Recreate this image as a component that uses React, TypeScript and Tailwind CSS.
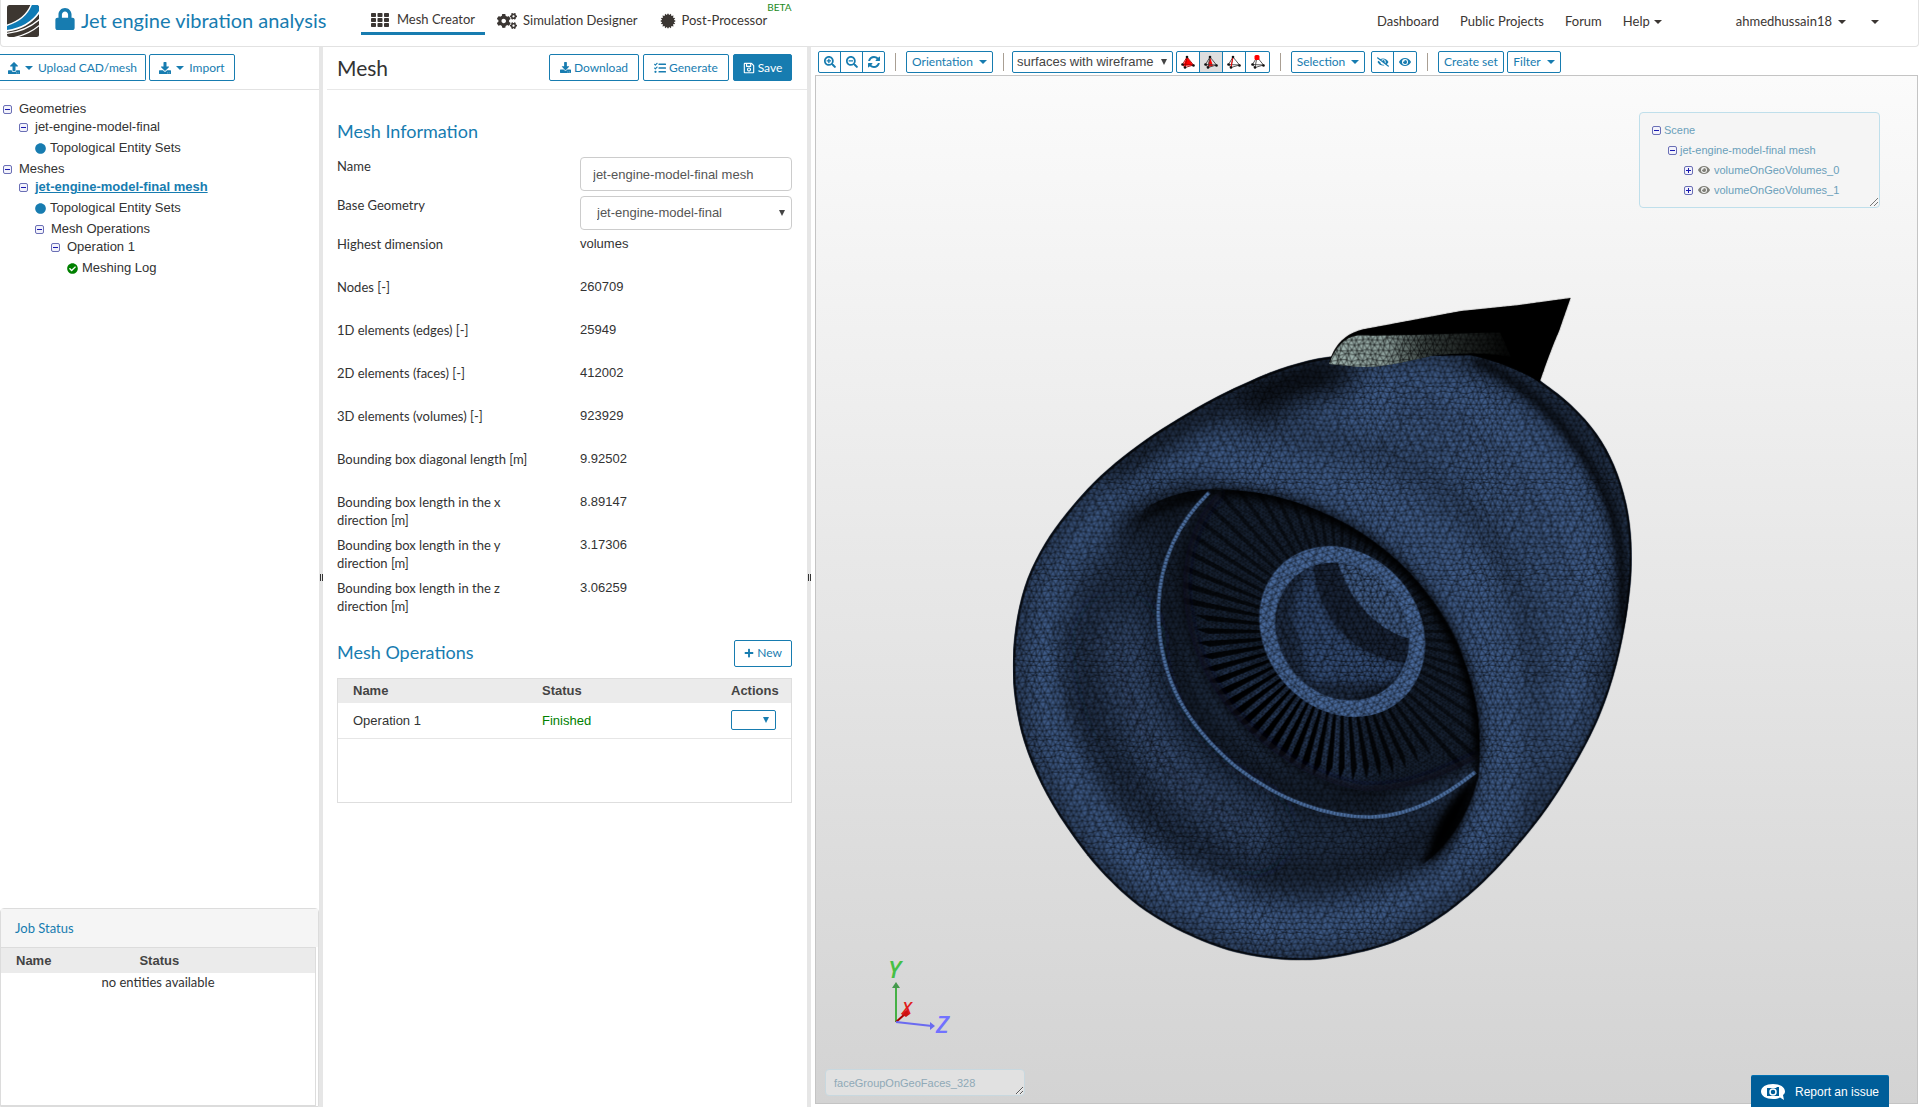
import React from 'react';
import clsx from 'clsx';
import {
  FaCheckCircle,
  FaCircle,
  FaCogs,
  FaDownload,
  FaEye,
  FaEyeSlash,
  FaLock,
  FaPlus,
  FaRegSave,
  FaSearchMinus,
  FaSearchPlus,
  FaTasks,
  FaUpload,
} from 'react-icons/fa';

const lato = "font-['Lato','Open_Sans',sans-serif]";
const arial = "font-['Liberation_Sans',Arial,sans-serif]";

type TreeNode = {
  label: string;
  level: number;
  kind: 'branch' | 'set' | 'done';
  active?: boolean;
};

const tree: TreeNode[] = [
  { label: 'Geometries', level: 0, kind: 'branch' },
  { label: 'jet-engine-model-final', level: 1, kind: 'branch' },
  { label: 'Topological Entity Sets', level: 2, kind: 'set' },
  { label: 'Meshes', level: 0, kind: 'branch' },
  { label: 'jet-engine-model-final mesh', level: 1, kind: 'branch', active: true },
  { label: 'Topological Entity Sets', level: 2, kind: 'set' },
  { label: 'Mesh Operations', level: 2, kind: 'branch' },
  { label: 'Operation 1', level: 3, kind: 'branch' },
  { label: 'Meshing Log', level: 4, kind: 'done' },
];

const indents = ['pl-[3px]', 'pl-[19px]', 'pl-[35px]', 'pl-[51px]', 'pl-[67px]'];

const meshFacts = [
  ['Highest dimension', 'volumes'],
  ['Nodes [-]', '260709'],
  ['1D elements (edges) [-]', '25949'],
  ['2D elements (faces) [-]', '412002'],
  ['3D elements (volumes) [-]', '923929'],
  ['Bounding box diagonal length [m]', '9.92502'],
  ['Bounding box length in the x direction [m]', '8.89147'],
  ['Bounding box length in the y direction [m]', '3.17306'],
  ['Bounding box length in the z direction [m]', '3.06259'],
];

function Caret({ className }: { className?: string }) {
  return (
    <svg className={clsx('h-1 w-2 shrink-0', className)} viewBox="0 0 8 4" fill="currentColor">
      <path d="M0 0h8L4 4z" />
    </svg>
  );
}

function Toggle({ open = true }: { open?: boolean }) {
  return (
    <svg className="h-[9px] w-[9px] shrink-0" viewBox="0 0 9 9">
      <rect x=".5" y=".5" width="8" height="8" rx="1.5" fill="#f2f2fb" stroke="#6a6fb5" />
      <path d="M2 4.5h5" stroke="#1a1ab0" />
      {!open && <path d="M4.5 2v5" stroke="#1a1ab0" />}
    </svg>
  );
}

function Logo() {
  return (
    <svg className="h-8 w-8" viewBox="0 0 32 32">
      <defs>
        <clipPath id="logo">
          <rect width="32" height="32" rx="2.5" />
        </clipPath>
      </defs>
      <g clipPath="url(#logo)">
        <rect width="32" height="32" fill="#3d3731" />
        <path d="M0 20C11 17 20 11 24 0h8v9C25 17 15 23 0 26z" fill="#0f7bb5" />
        <path d="M-1 20.5C11 17 20 11 24.500-1" fill="none" stroke="#fff" strokeWidth="1.400" />
        <path d="M-1 26C14 24 26 17 33 6" fill="none" stroke="#fff" strokeWidth="1.600" />
        <path d="M-1 28.500C14 27 25 21 33 14" fill="none" stroke="#fff" strokeWidth="1.200" />
        <path d="M5 33C16 31 26 26 33 20" fill="none" stroke="#fff" strokeWidth="1.200" />
      </g>
    </svg>
  );
}

function GridIcon() {
  return (
    <svg className="h-[14px] w-[18px]" viewBox="0 0 18 14" fill="currentColor">
      {[0, 5, 10].map((y) => [0, 6.5, 13].map((x) => <rect key={`${x}-${y}`} x={x} y={y} width="5" height="4" rx=".8" />))}
    </svg>
  );
}

function BurstIcon() {
  const points = Array.from({ length: 32 }, (_, i) => {
    const r = i % 2 ? 6 : 7.8;
    const a = (i * Math.PI) / 16;
    return `${(8 + r * Math.cos(a)).toFixed(2)},${(8 + r * Math.sin(a)).toFixed(2)}`;
  }).join(' ');
  return (
    <svg className="h-4 w-4" viewBox="0 0 16 16" fill="currentColor">
      <polygon points={points} />
    </svg>
  );
}

function RefreshIcon() {
  return (
    <svg className="h-3 w-3" viewBox="0 0 1536 1536" fill="currentColor">
      <path d="M1511 928q0 5-1 7-64 268-268 434.500t-478 166.500q-146 0-282.500-55t-243.500-157l-129 129q-19 19-45 19t-45-19-19-45v-448q0-26 19-45t45-19h448q26 0 45 19t19 45-19 45l-137 137q71 66 161 102t187 36q134 0 250-65t186-179q11-17 53-117 8-23 30-23h192q13 0 22.500 9.500t9.500 22.500z" />
      <path d="M1536 128v448q0 26-19 45t-45 19h-448q-26 0-45-19t-19-45 19-45l138-138q-148-137-349-137-134 0-250 65t-186 179q-11 17-53 117-8 23-30 23h-199q-13 0-22.500-9.500t-9.500-22.500v-7q65-268 270-434.500t480-166.500q146 0 284 55.500t245 156.500l130-129q19-19 45-19t45 19 19 45z" />
    </svg>
  );
}

type TetraMode = 'solid' | 'edges' | 'wire' | 'points';

function TetraIcon({ mode }: { mode: TetraMode }) {
  return (
    <svg className="h-[14px] w-[14px]" viewBox="0 0 14 14">
      {mode === 'solid' && <path d="M6 2L2 11l10-1z" fill="#f00" />}
      {mode === 'edges' && <path d="M6 2L3.500 12 9 11z" fill="#f00" />}
      <path
        d="M6 2L1.500 9.500 4 12.500l8.500-2.500zM1.500 9.500l11 .5M6 2L4 12.500"
        fill="none"
        stroke={mode === 'solid' ? '#a00' : '#444'}
        strokeWidth=".9"
      />
      {mode === 'wire' && <path d="M6 2L4 12" stroke="#f00" />}
      {[
        [6, 2],
        [1.5, 9.5],
        [4, 12.5],
        [12.5, 10.5],
      ].map(([x, y]) => (
        <circle key={x} cx={x} cy={y} r="1.3" fill="#111" />
      ))}
      {mode === 'points' && <rect x="3.500" y="0" width="5" height="5" rx="1.500" fill="#f00" />}
    </svg>
  );
}

function NavBar() {
  return (
    <header className={clsx('flex h-[47px] shrink-0 items-start rounded-b border border-t-0 border-[#e2e2e2] text-[13px] text-[#3b3633]', lato)}>
      <a href="#home" aria-label="Home" className="ml-[6px] mt-[5px]">
        <Logo />
      </a>
      <FaLock className="ml-4 mt-2 h-[22px] w-5 text-[#177cb0]" />
      <h1 className="ml-[6px] mt-[6px] w-[280px] text-xl leading-7 text-[#177cb0]">Jet engine vibration analysis</h1>
      <nav className="flex">
        <a href="#mesh" className="flex h-[35px] items-center gap-2 border-b-3 border-[#177cb0] px-[10px] pt-2">
          <GridIcon />
          Mesh Creator
        </a>
        <a href="#simulation" className="flex h-[35px] items-center gap-[6px] px-3 pt-[6px]">
          <FaCogs className="h-5 w-5" />
          Simulation Designer
        </a>
        <a href="#post" className="flex h-[35px] items-center gap-[6px] pl-[10px] pt-[6px]">
          <BurstIcon />
          Post-Processor
        </a>
        <span className="text-[10px] leading-[15px] text-[#1b8a1b]">BETA</span>
      </nav>
      <nav className="ml-auto mr-[39px] flex h-[43px] items-center">
        <a href="#dashboard" className="mr-[21px]">Dashboard</a>
        <a href="#projects" className="mr-[21px]">Public Projects</a>
        <a href="#forum" className="mr-[21px]">Forum</a>
        <button className="mr-[74px] flex items-center gap-1">
          Help <Caret />
        </button>
        <button className="mr-[25px] flex items-center gap-[6px]">
          ahmedhussain18 <Caret />
        </button>
        <button aria-label="More">
          <Caret />
        </button>
      </nav>
    </header>
  );
}

function ActionButton({ children, className, primary }: { children: React.ReactNode; className?: string; primary?: boolean }) {
  return (
    <button
      className={clsx(
        'flex h-[27px] items-center justify-center gap-[3px] rounded-xs border border-[#177cb0] text-xs',
        lato,
        primary ? 'bg-[#177cb0] text-white' : 'bg-white text-[#177cb0]',
        className,
      )}
    >
      {children}
    </button>
  );
}

function ProjectTree() {
  return (
    <ul className={clsx('pt-[10px] text-[13px] text-[#333]', arial)}>
      {tree.map((node, i) => (
        <li
          key={i}
          className={clsx('flex items-center', indents[node.level], node.kind === 'branch' ? 'h-[18px] gap-[7px]' : 'h-6 gap-1')}
        >
          {node.kind === 'branch' && <Toggle />}
          {node.kind === 'set' && <FaCircle className="h-[11px] w-[11px] text-[#177cb0]" />}
          {node.kind === 'done' && <FaCheckCircle className="h-[11px] w-[11px] text-[#008000]" />}
          {node.active ? (
            <a href="#mesh" className="font-bold text-[#177cb0] underline">
              {node.label}
            </a>
          ) : (
            <span>{node.label}</span>
          )}
        </li>
      ))}
    </ul>
  );
}

function JobStatus() {
  return (
    <section className="flex h-[199px] flex-col rounded-t border border-[#dcdcdc] text-[#333]">
      <h2 className={clsx('h-[38px] bg-[#f5f5f5] px-[14px] text-[13px] leading-[38px] text-[#177cb0]', lato)}>Job Status</h2>
      <div className="mr-[2px] flex-1 border border-l-0 border-[#dcdcdc]">
        <table className="w-full table-fixed">
          <thead className={clsx('bg-[#ebebeb] text-[13px] text-[#444]', arial)}>
            <tr className="h-[25px]">
              <th className="w-[39%] pl-[15px] text-left">Name</th>
              <th className="pl-4 text-left">Status</th>
            </tr>
          </thead>
          <tbody className={clsx('text-[13px]', lato)}>
            <tr>
              <td colSpan={2} className="text-center leading-[18px]">
                no entities available
              </td>
            </tr>
          </tbody>
        </table>
      </div>
    </section>
  );
}

function Splitter() {
  return (
    <div className="flex w-1 shrink-0 items-center justify-center bg-[#e6e6e6]">
      <div className="h-[7px] w-[3px] border-x border-[#333]" />
    </div>
  );
}

function MeshPanel() {
  return (
    <main className="w-[484px] shrink-0 text-[#333]">
      <div className="ml-1 flex h-[43px] items-center gap-1 border-b border-[#e8e8e8] pb-px pl-[10px] pr-[15px]">
        <h2 className={clsx('mr-auto text-[21px]', lato)}>Mesh</h2>
        <ActionButton className="w-[90px]">
          <FaDownload className="h-[11px] w-[11px]" />
          Download
        </ActionButton>
        <ActionButton className="w-[86px]">
          <FaTasks className="h-3 w-3" />
          Generate
        </ActionButton>
        <ActionButton className="w-[59px]" primary>
          <FaRegSave className="h-3 w-3" />
          Save
        </ActionButton>
      </div>
      <div className="pl-[14px] pr-[15px]">
        <h3 className={clsx('pb-3 pt-[27px] text-lg leading-7 text-[#177cb0]', lato)}>Mesh Information</h3>
        <div className="flex h-[39px] items-start justify-between">
          <label htmlFor="mesh-name" className={clsx('text-[13px] leading-[18px]', lato)}>
            Name
          </label>
          <input
            id="mesh-name"
            defaultValue="jet-engine-model-final mesh"
            className={clsx('h-[34px] w-[212px] rounded border border-[#ccc] px-3 text-[13px] text-[#555]', arial)}
          />
        </div>
        <div className="flex h-[39px] items-start justify-between">
          <label htmlFor="base-geometry" className={clsx('text-[13px] leading-[18px]', lato)}>
            Base Geometry
          </label>
          <div className="relative">
            <select
              id="base-geometry"
              className={clsx('h-[34px] w-[212px] appearance-none rounded border border-[#ccc] bg-white px-4 text-[13px] text-[#555]', arial)}
            >
              <option>jet-engine-model-final</option>
            </select>
            <svg className="pointer-events-none absolute right-[7px] top-[14px] h-[6px] w-[6px]" viewBox="0 0 6 6" fill="#444">
              <path d="M0 0h6L3 6z" />
            </svg>
          </div>
        </div>
        <dl>
          {meshFacts.map(([label, value]) => (
            <div key={label} className="flex h-[43px] items-start justify-between">
              <dt className={clsx('w-[200px] text-[13px] leading-[18px]', lato)}>{label}</dt>
              <dd className={clsx('w-[212px] text-[13px] leading-[18px]', arial)}>{value}</dd>
            </div>
          ))}
        </dl>
        <div className="mt-[17px] flex items-center justify-between">
          <h3 className={clsx('pb-[2px] text-lg leading-[26px] text-[#177cb0]', lato)}>Mesh Operations</h3>
          <ActionButton className="w-[58px]">
            <FaPlus className="h-[10px] w-[10px]" />
            New
          </ActionButton>
        </div>
        <div className="mt-[11px] h-[125px] border border-[#dedede]">
          <table className={clsx('w-full table-fixed text-left text-[13px]', arial)}>
            <thead className="bg-[#ebebeb] text-[#444]">
              <tr className="h-6">
                <th className="w-[188px] pl-[15px]">Name</th>
                <th className="pl-4">Status</th>
                <th className="w-[60px]">Actions</th>
              </tr>
            </thead>
            <tbody>
              <tr className="h-[35px] border-b border-[#e6e6e6]">
                <td className="pl-[15px]">Operation 1</td>
                <td className="pl-4 text-[#008000]">Finished</td>
                <td>
                  <div className="relative w-[45px]">
                    <select aria-label="Actions for Operation 1" className="block h-5 w-[45px] appearance-none rounded-xs border border-[#177cb0] bg-white">
                      <option />
                    </select>
                    <svg className="pointer-events-none absolute right-[7px] top-[7px] h-[6px] w-[6px]" viewBox="0 0 6 6" fill="#177cb0">
                      <path d="M0 0h6L3 6z" />
                    </svg>
                  </div>
                </td>
              </tr>
            </tbody>
          </table>
        </div>
      </div>
    </main>
  );
}

function ToolButton({ children, className, ...rest }: React.ButtonHTMLAttributes<HTMLButtonElement>) {
  return (
    <button
      className={clsx('flex h-[22px] items-center justify-center gap-[6px] rounded-xs border border-[#177cb0] text-xs text-[#177cb0]', className)}
      {...rest}
    >
      {children}
    </button>
  );
}

function ToolGroup({ children }: { children: React.ReactNode }) {
  return <div className="flex h-[22px] divide-x divide-[#177cb0] overflow-hidden rounded-xs border border-[#177cb0] text-[#177cb0]">{children}</div>;
}

function GroupButton({ children, label, pressed }: { children: React.ReactNode; label: string; pressed?: boolean }) {
  return (
    <button aria-label={label} title={label} className={clsx('flex w-[23px] items-center justify-center', pressed && 'bg-[#dedede]')}>
      {children}
    </button>
  );
}

function Divider() {
  return <div className="ml-[10px] mr-[10px] h-[18px] w-px bg-[#a99f93]" />;
}

function ViewToolbar() {
  return (
    <div className={clsx('flex h-7 shrink-0 items-center pl-[3px] pt-px', lato)}>
      <ToolGroup>
        <button aria-label="Zoom in" className="flex w-[22px] items-center justify-center">
          <FaSearchPlus className="h-3 w-3" />
        </button>
        <button aria-label="Zoom out" className="flex w-[22px] items-center justify-center">
          <FaSearchMinus className="h-3 w-3" />
        </button>
        <button aria-label="Reset view" className="flex w-[21px] items-center justify-center">
          <RefreshIcon />
        </button>
      </ToolGroup>
      <Divider />
      <ToolButton className="w-[87px]">
        Orientation <Caret />
      </ToolButton>
      <Divider />
      <div className="relative ml-[-2px] mr-[3px]">
        <select
          aria-label="Render mode"
          className={clsx('block h-[22px] w-[161px] appearance-none rounded-xs border border-[#177cb0] bg-white px-1 text-[13px] leading-5 text-[#444]', arial)}
        >
          <option>surfaces with wireframe</option>
        </select>
        <svg className="pointer-events-none absolute right-[6px] top-2 h-[6px] w-[6px]" viewBox="0 0 6 6" fill="#444">
          <path d="M0 0h6L3 6z" />
        </svg>
      </div>
      <ToolGroup>
        <GroupButton label="Surfaces">
          <TetraIcon mode="solid" />
        </GroupButton>
        <GroupButton label="Surfaces with wireframe" pressed>
          <TetraIcon mode="edges" />
        </GroupButton>
        <GroupButton label="Wireframe">
          <TetraIcon mode="wire" />
        </GroupButton>
        <GroupButton label="Points">
          <TetraIcon mode="points" />
        </GroupButton>
      </ToolGroup>
      <Divider />
      <ToolButton className="mr-[6px] w-[74px]">
        Selection <Caret />
      </ToolButton>
      <ToolGroup>
        <button aria-label="Hide" className="flex w-[22px] items-center justify-center">
          <FaEyeSlash className="h-3 w-3" />
        </button>
        <button aria-label="Show" className="flex w-[22px] items-center justify-center">
          <FaEye className="h-3 w-3" />
        </button>
      </ToolGroup>
      <Divider />
      <ToolButton className="mr-[3px] w-[66px]">Create set</ToolButton>
      <ToolButton className="w-[54px]">
        Filter <Caret />
      </ToolButton>
    </div>
  );
}

// Seamless triangulated tile: grid nodes are jittered, and the jitter wraps at the tile edge.
function meshTile(cells: number, step: number, jitter: number) {
  const offset = (i: number, j: number, k: number) => {
    const s = Math.sin((((i + cells) % cells) + 1) * 127.1 + (((j + cells) % cells) + 1) * 311.7 + k * 74.7) * 43758.5;
    return (s - Math.floor(s) - 0.5) * jitter;
  };
  const node = (i: number, j: number) =>
    `${(i * step + (j % 2 ? step / 2 : 0) + offset(i, j, 1)).toFixed(1)} ${(j * step + offset(i, j, 2)).toFixed(1)}`;
  let d = '';
  for (let j = -1; j <= cells; j++) {
    for (let i = -1; i <= cells; i++) {
      const odd = Math.abs(j % 2);
      d += `M${node(i, j)}L${node(i + 1, j)}M${node(i, j)}L${node(i + odd, j + 1)}M${node(i + 1, j)}L${node(i + odd, j + 1)}`;
    }
  }
  return d;
}

// Smooth closed outline through the given points.
function closedSpline(points: number[][]) {
  const n = points.length;
  const at = (i: number) => points[(i + n) % n];
  let d = `M${points[0].join(' ')}`;
  for (let i = 0; i < n; i++) {
    const [a, b, c, e] = [at(i - 1), at(i), at(i + 1), at(i + 2)];
    d += `C${b[0] + (c[0] - a[0]) / 6} ${b[1] + (c[1] - a[1]) / 6} ${c[0] - (e[0] - b[0]) / 6} ${c[1] - (e[1] - b[1]) / 6} ${c[0]} ${c[1]}`;
  }
  return `${d}z`;
}

const tile = meshTile(12, 12, 7);

const BODY = closedSpline([
  [780, 176], [690, 200], [620, 228], [550, 260], [480, 298], [400, 346], [330, 396], [262, 454], [200, 522], [150, 590], [110, 668],
  [86, 755], [76, 850], [81, 940], [102, 1035], [142, 1130], [200, 1225], [280, 1325], [380, 1412], [500, 1475], [620, 1512],
  [760, 1523], [900, 1500], [1000, 1463], [1100, 1400], [1200, 1310], [1310, 1180], [1400, 1035], [1450, 920], [1482, 800],
  [1500, 680], [1502, 590], [1490, 500], [1462, 415], [1422, 345], [1365, 282], [1295, 228], [1200, 165], [1000, 155], [880, 165],
]);
const OPENING =
  'M318 568C370 500 450 470 540 468C640 468 740 492 850 548C960 610 1050 700 1105 820C1145 920 1158 1020 1150 1110C1130 1190 1090 1260 1020 1310C900 1350 700 1380 520 1330C300 1240 200 1050 210 840C220 700 260 630 318 568z';
const OPENING_EDGE =
  'M380 500C430 478 480 468 540 468C640 468 740 492 850 548C960 610 1050 700 1105 820C1145 920 1158 1020 1150 1110C1130 1190 1090 1260 1020 1310';
const FAN =
  'M555 470C500 520 468 600 468 690C475 820 530 920 600 990C690 1080 790 1130 890 1145C1000 1145 1090 1100 1152 1070C1156 980 1140 900 1100 815C1045 700 960 610 850 550C750 495 650 470 555 470z';
const CASING_RING = 'M528 476C450 550 410 640 411 750C415 900 480 1000 590 1090C690 1165 800 1203 900 1203C1000 1200 1080 1150 1142 1102';
const PYLON =
  'M805 188C815 145 845 118 885 110L1060 78L1110 69L1240 56L1362 40L1335 115C1315 160 1303 195 1291 228C1250 205 1190 180 1130 168L1040 170C990 180 930 198 870 194z';

function EngineModel() {
  const blades = Array.from({ length: 68 }, (_, i) => {
    const a = (i * Math.PI * 2) / 68;
    // blades facing the lower left are wider and end in a pointed tip
    const near = Math.max(0, Math.cos(a - (Math.PI * 127) / 180));
    const w = 0.01 + near * 0.012;
    const p = (r: number, t: number) => `${(835 + r * Math.cos(t)).toFixed(1)},${(787 + r * Math.sin(t)).toFixed(1)}`;
    const tip = a > 0.9 && a < 3.3 ? 352 - near * 22 : 480;
    return (
      <polygon
        key={i}
        points={[p(170, a - 0.02), p(tip - 30, a - w), p(tip, a + w), p(tip - 28, a + w * 1.4), p(170, a + 0.015)].join(' ')}
        fill="#000"
        opacity={0.5 + near * 0.5}
      />
    );
  });

  return (
    <svg className="absolute left-[164px] top-[204px] h-[700px] w-[680px]" viewBox="0 0 1568 1568" preserveAspectRatio="none" role="img" aria-label="Jet engine mesh">
      <defs>
        <pattern id="mesh" width="144" height="144" patternUnits="userSpaceOnUse">
          <path d={tile} fill="none" stroke="#000" strokeWidth="1.400" />
        </pattern>
        <pattern id="mesh-wide" width="144" height="144" patternUnits="userSpaceOnUse" patternTransform="rotate(18) scale(1.6)">
          <path d={tile} fill="none" stroke="#000" strokeWidth="1.100" />
        </pattern>
        <pattern id="mesh-fine" width="144" height="144" patternUnits="userSpaceOnUse" patternTransform="rotate(30) scale(.6)">
          <path d={tile} fill="none" stroke="#000" strokeWidth="1.800" />
        </pattern>
        <clipPath id="body">
          <path d={BODY} />
        </clipPath>
        <clipPath id="opening">
          <path d={OPENING} />
        </clipPath>
        <clipPath id="fan">
          <path d={FAN} />
        </clipPath>
        <clipPath id="bore">
          <ellipse rx="164" ry="144" transform="translate(835 787) rotate(45)" />
        </clipPath>
        <filter id="soft" x="-30%" y="-30%" width="160%" height="160%">
          <feGaussianBlur stdDeviation="30" />
        </filter>
        <filter id="soft-sm" x="-30%" y="-30%" width="160%" height="160%">
          <feGaussianBlur stdDeviation="9" />
        </filter>
        <linearGradient id="pylon" x1="805" x2="1240" y1="0" y2="0" gradientUnits="userSpaceOnUse">
          <stop offset="0" stopColor="#a6bcb7" />
          <stop offset=".3" stopColor="#8fa29e" />
          <stop offset=".5" stopColor="#3a4341" />
          <stop offset="1" stopColor="#000" />
        </linearGradient>
      </defs>

      <g clipPath="url(#body)">
        <rect width="1568" height="1568" fill="#405d8b" />
        {/* shading of the outer shell */}
        <g fill="none" stroke="#000" filter="url(#soft)">
          <path d={BODY} strokeWidth="36" opacity=".6" />
          <path d="M300 440C450 320 620 240 800 190" strokeWidth="50" opacity=".7" />
          <path d="M620 300C700 250 760 235 860 215" strokeWidth="60" opacity=".8" />
          <path d="M560 330C700 330 850 360 950 410C1060 460 1180 550 1230 680C1290 850 1310 1050 1260 1200" strokeWidth="46" opacity=".3" />
          <path d="M1100 170C1300 230 1450 380 1490 600C1490 760 1470 840 1440 930" strokeWidth="40" opacity=".65" />
        </g>
        <path d="M1140 180C1280 240 1390 360 1450 500C1480 580 1484 680 1482 780" fill="none" stroke="#000" strokeWidth="18" opacity=".8" filter="url(#soft-sm)" />

        {/* intake */}
        <path d={OPENING} fill="#000" opacity=".46" filter="url(#soft)" />
        <g fill="none" strokeLinecap="round" filter="url(#soft)">
          <path d="M320 800C320 960 410 1130 620 1230" stroke="#405d8b" strokeWidth="110" opacity=".65" />
          <path d="M640 1340C800 1370 960 1330 1060 1240" stroke="#000" strokeWidth="80" opacity=".4" />
          <path d="M240 640C220 760 210 900 250 1000" stroke="#000" strokeWidth="30" opacity=".4" />
          <path d="M460 560C420 700 420 850 500 990C600 1120 760 1180 940 1170" stroke="#000" strokeWidth="60" opacity=".55" />
          <path d="M340 560C400 500 460 490 520 480" stroke="#000" strokeWidth="50" opacity=".7" />
        </g>
        <rect width="1568" height="1568" fill="url(#mesh)" opacity=".9" />
        <path d="M250 760C240 1000 400 1240 620 1270" fill="none" stroke="url(#mesh-wide)" strokeWidth="170" opacity=".4" />
        <path d="M940 300C1150 380 1300 560 1340 900" fill="none" stroke="url(#mesh-wide)" strokeWidth="170" opacity=".3" />
        <path d={BODY} fill="none" stroke="#000" strokeWidth="10" opacity=".8" />
        <g clipPath="url(#opening)">
          <path d={OPENING_EDGE} fill="none" stroke="#000" strokeWidth="24" filter="url(#soft-sm)" />
          <path d="M340 550C400 500 470 480 535 470L500 496C430 508 390 530 340 550z" fill="#000" filter="url(#soft-sm)" />
        </g>
        <path d="M1142 1110C1120 1210 1080 1270 1035 1300C1035 1240 1080 1160 1142 1110z" fill="#000" stroke="#000" strokeWidth="6" filter="url(#soft-sm)" />

        {/* fan */}
        <path d={FAN} fill="none" stroke="#000" strokeWidth="16" opacity=".6" filter="url(#soft-sm)" />
        <g clipPath="url(#fan)">
          <path d={FAN} fill="#1b283c" />
          <path d="M600 990C690 1080 790 1130 890 1145L860 960L690 900L480 780z" fill="#304a70" opacity=".8" filter="url(#soft)" />
          <path d={FAN} fill="url(#mesh-fine)" />
          {blades}
          <path d="M555 470C500 520 468 600 468 690C475 820 530 920 600 990C690 1080 790 1130 890 1145C1000 1145 1090 1100 1152 1070" fill="none" stroke="#0b111b" strokeWidth="26" opacity=".8" filter="url(#soft-sm)" />
          <path d="M555 470C650 470 750 495 850 550C960 610 1045 700 1100 815C1140 900 1156 980 1152 1070" fill="none" stroke="#000" strokeWidth="30" filter="url(#soft-sm)" />
        </g>
        <path d={CASING_RING} fill="none" stroke="#4d6f9f" strokeWidth="8" />
        <path d={CASING_RING} fill="none" stroke="#22344f" strokeWidth="8" strokeDasharray="2 6" />

        {/* hub */}
        <ellipse rx="205" ry="176" transform="translate(835 787) rotate(45)" fill="#4a6b9e" />
        <ellipse rx="205" ry="176" transform="translate(835 787) rotate(45)" fill="url(#mesh)" opacity=".85" />
        <g clipPath="url(#bore)">
          <rect x="640" y="600" width="400" height="400" fill="#213049" />
          <path d="M765 620C770 740 840 850 990 860L960 900L760 900L720 740z" fill="#34507a" filter="url(#soft-sm)" />
          <path d="M824 630C850 720 920 790 1000 806V600z" fill="#425f8c" />
          <path d="M768 630C780 760 860 850 1000 860L1000 806C920 790 850 720 824 630z" fill="#1a263b" />
          <path d="M850 940C930 930 980 890 1010 830V980z" fill="#000" opacity=".7" filter="url(#soft-sm)" />
          <rect x="640" y="600" width="400" height="400" fill="url(#mesh)" />
        </g>
      </g>

      <path d={PYLON} fill="#000" />
      <path d="M805 188C820 150 840 128 872 124C980 126 1100 118 1200 118L1225 172C1180 165 1120 160 1040 170C990 180 930 198 870 194z" fill="url(#pylon)" />
      <path d={PYLON} fill="url(#mesh)" />
    </svg>
  );
}

function AxisTriad() {
  return (
    <svg className="absolute bottom-[60px] left-[61px] h-[100px] w-[100px]" viewBox="0 0 100 100" fontFamily="Open Sans, sans-serif" fontStyle="italic" fontWeight="600">
      <path d="M19 79V43" stroke="#45b045" strokeWidth="2" />
      <path d="M15 45l4-6 4 6z" fill="#45994d" />
      <path d="M19 79L28 71" stroke="#a00" strokeWidth="2" />
      <path d="M24 71l7-5 2 5-4 3z" fill="#c11" />
      <path d="M19 79l36 4" stroke="#6a6af0" strokeWidth="2" />
      <path d="M53 79l5 4-5 4z" fill="#6a6af0" />
      <text x="11" y="35" fontSize="24" fill="#45c045">Y</text>
      <text x="25" y="71" fontSize="17" fill="#e01c1c">X</text>
      <text x="59" y="90" fontSize="24" fill="#7272ff">Z</text>
    </svg>
  );
}

function SceneTree() {
  return (
    <div className={clsx('absolute right-[37px] top-9 h-24 w-[241px] rounded border border-[#bfdfeb] bg-[#f5f5f5] py-[7px] pl-3 text-[11px] text-[#6a9fba]', arial)}>
      <ul>
        <li className="flex h-5 items-center gap-[3px]">
          <Toggle />
          Scene
        </li>
        <li className="flex h-5 items-center gap-[3px] pl-4">
          <Toggle />
          jet-engine-model-final mesh
        </li>
        {['volumeOnGeoVolumes_0', 'volumeOnGeoVolumes_1'].map((name) => (
          <li key={name} className="flex h-5 items-center pl-8">
            <Toggle open={false} />
            <FaEye className="ml-[5px] mr-1 h-3 w-3 text-[#808078]" />
            {name}
          </li>
        ))}
      </ul>
      <svg className="absolute bottom-px right-px h-2 w-2" viewBox="0 0 8 8" stroke="#777">
        <path d="M0 8l8-8M4 8l4-4" />
      </svg>
    </div>
  );
}

function Viewport() {
  return (
    <div className="relative mb-[3px] mr-px flex-1 overflow-hidden border border-[#c4c4c4] bg-linear-to-b from-[#fbfbfb] to-[#d3d3d3]">
      <EngineModel />
      <AxisTriad />
      <SceneTree />
      <textarea
        aria-label="Selected entity"
        defaultValue="faceGroupOnGeoFaces_328"
        className={clsx('absolute bottom-[7px] left-[9px] h-[27px] w-[200px] overflow-hidden rounded border border-[#c8d8df] bg-[#e1e1e1] px-2 py-[5px] text-[11px] text-[#8fa9b7]', arial)}
      />
    </div>
  );
}

function ReportButton() {
  return (
    <button className={clsx('fixed bottom-0 right-[30px] flex h-8 w-[138px] items-center gap-[10px] rounded-t-xs border-t border-[#0071b3] bg-[#005e99] pl-[10px] text-xs text-white', arial)}>
      <svg className="h-4 w-6" viewBox="0 0 24 16">
        <path d="M12 0C5 0 0 3 0 7.500S5 15 12 15c3 0 5-.5 7-1.500l4 2.500-1-5c1.300-1 2-2 2-3.500C24 3 19 0 12 0z" fill="#fff" />
        <path d="M6 4h9l1-1h2v9H6z" fill="#005e99" />
        <circle cx="12" cy="8" r="3" fill="none" stroke="#fff" strokeWidth="1.500" />
      </svg>
      Report an issue
    </button>
  );
}

export default function App() {
  return (
    <div className="flex h-screen flex-col bg-white">
      <NavBar />
      <div className="flex min-h-0 flex-1">
        <aside className="flex w-[319px] shrink-0 flex-col">
          <div className="flex h-[43px] shrink-0 items-center gap-[3px] border-b border-[#e2e2e2] pb-px">
            <ActionButton className="w-[146px] rounded-l-none border-l-0">
              <FaUpload className="mr-[2px] h-3 w-3" />
              <Caret className="mr-[2px]" />
              Upload CAD/mesh
            </ActionButton>
            <ActionButton className="w-[86px]">
              <FaDownload className="mr-[2px] h-3 w-3" />
              <Caret className="mr-[2px]" />
              Import
            </ActionButton>
          </div>
          <div className="flex-1">
            <ProjectTree />
          </div>
          <JobStatus />
        </aside>
        <Splitter />
        <MeshPanel />
        <Splitter />
        <section className="ml-1 flex min-w-0 flex-1 flex-col">
          <ViewToolbar />
          <Viewport />
        </section>
      </div>
      <ReportButton />
    </div>
  );
}
